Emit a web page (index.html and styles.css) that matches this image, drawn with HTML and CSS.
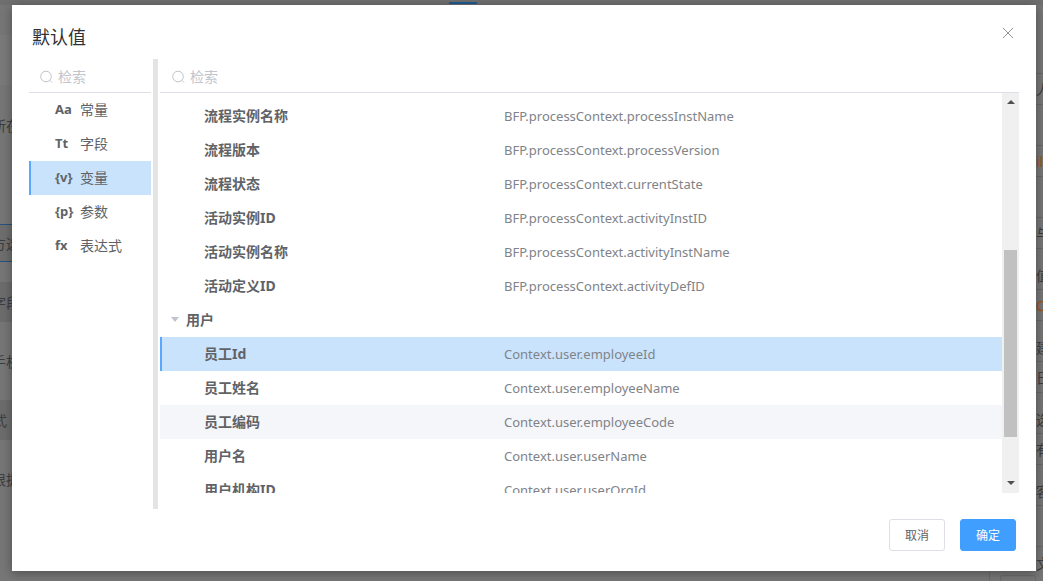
FILE: index.html
```html
<!DOCTYPE html>
<html lang="zh-CN">
<head>
<meta charset="utf-8">
<title>默认值</title>
<link rel="stylesheet" href="styles.css">
</head>
<body>
<div class="backdrop">
  <div class="top-strip"><span class="top-tab"></span></div>
  <div class="bg-main">
    <div class="bg-col bg-left">
      <div class="bg-row h30"></div>
      <div class="bg-row h50 lighter"></div>
      <div class="bg-row h20"></div>
      <div class="bg-row h40"><span class="bg-text">所在</span></div>
      <div class="bg-row h79"></div>
      <div class="bg-row h38 blue"><span class="bg-text">方选</span></div>
      <div class="bg-row h20"></div>
      <div class="bg-row h40 band"><span class="bg-text">字段</span></div>
      <div class="bg-row h78"><span class="bg-text">手机</span></div>
      <div class="bg-row h40 band"><span class="bg-text flush">式</span></div>
      <div class="bg-row h78"><span class="bg-text">根据</span></div>
    </div>
    <div class="bg-mid"><div class="bg-foot"><span class="bg-box"></span></div></div>
    <div class="bg-col bg-right">
      <div class="bg-row h69 line"></div>
      <div class="bg-row h31 line"><span class="bg-text">人</span></div>
      <div class="bg-row h41 line"></div>
      <div class="bg-row h31 line"><span class="bg-text orange">il</span></div>
      <div class="bg-row h41 line"></div>
      <div class="bg-row h31 line"><span class="bg-text">与</span></div>
      <div class="bg-row h41 line low"><span class="bg-text">值</span></div>
      <div class="bg-row h31 line"><span class="bg-text orange">Co</span></div>
      <div class="bg-row h41 line low"><span class="bg-text">建</span></div>
      <div class="bg-row h31 line"><span class="bg-text">日</span></div>
      <div class="bg-row h41 line low"><span class="bg-text">选</span></div>
      <div class="bg-row h31 line"><span class="bg-text">有</span></div>
      <div class="bg-row h41 line low"><span class="bg-text">客</span></div>
      <div class="bg-row h41 line"></div>
      <div class="bg-row h31"><span class="bg-text">文</span></div>
    </div>
  </div>
</div>

<div class="modal">
  <header class="modal-head">
    <h2 class="modal-title">默认值</h2>
    <svg class="close" viewBox="0 0 12 12" width="12" height="12"><path d="M1 1L11 11M11 1L1 11" fill="none" stroke="#909399" stroke-width="1"/></svg>
  </header>
  <div class="modal-body">
    <aside class="side">
      <div class="search">
        <svg class="search-icon" viewBox="0 0 14 14" width="14" height="14"><circle cx="7" cy="6.5" r="5.3" fill="none" stroke="#c0c4cc" stroke-width="1"/><path d="M10.7 10.2L13 12.5" stroke="#c0c4cc" stroke-width="1"/></svg>
        <span class="placeholder">检索</span>
      </div>
      <ul class="menu">
        <li class="menu-item"><b class="menu-key">Aa</b><span>常量</span></li>
        <li class="menu-item"><b class="menu-key">Tt</b><span>字段</span></li>
        <li class="menu-item active"><b class="menu-key">{v}</b><span>变量</span></li>
        <li class="menu-item"><b class="menu-key">{p}</b><span>参数</span></li>
        <li class="menu-item"><b class="menu-key">fx</b><span>表达式</span></li>
      </ul>
    </aside>
    <div class="splitter"></div>
    <section class="main">
      <div class="search search-main">
        <svg class="search-icon" viewBox="0 0 14 14" width="14" height="14"><circle cx="7" cy="6.5" r="5.3" fill="none" stroke="#c0c4cc" stroke-width="1"/><path d="M10.7 10.2L13 12.5" stroke="#c0c4cc" stroke-width="1"/></svg>
        <span class="placeholder">检索</span>
      </div>
      <div class="table-wrap">
        <div class="table">
          <div class="row"><span class="name">流程实例名称</span><span class="val">BFP.processContext.processInstName</span></div>
          <div class="row"><span class="name">流程版本</span><span class="val">BFP.processContext.processVersion</span></div>
          <div class="row"><span class="name">流程状态</span><span class="val">BFP.processContext.currentState</span></div>
          <div class="row"><span class="name">活动实例ID</span><span class="val">BFP.processContext.activityInstID</span></div>
          <div class="row"><span class="name">活动实例名称</span><span class="val">BFP.processContext.activityInstName</span></div>
          <div class="row"><span class="name">活动定义ID</span><span class="val">BFP.processContext.activityDefID</span></div>
          <div class="row group"><span class="caret"></span><span class="group-name">用户</span></div>
          <div class="row selected"><span class="name">员工Id</span><span class="val">Context.user.employeeId</span></div>
          <div class="row"><span class="name">员工姓名</span><span class="val">Context.user.employeeName</span></div>
          <div class="row hover"><span class="name">员工编码</span><span class="val">Context.user.employeeCode</span></div>
          <div class="row"><span class="name">用户名</span><span class="val">Context.user.userName</span></div>
          <div class="row"><span class="name">用户机构ID</span><span class="val">Context.user.userOrgId</span></div>
        </div>
        <div class="scrollbar">
          <span class="arrow up"></span>
          <span class="thumb"></span>
          <span class="arrow down"></span>
        </div>
      </div>
    </section>
  </div>
  <footer class="modal-foot">
    <button class="btn">取消</button>
    <button class="btn primary">确定</button>
  </footer>
</div>
</body>
</html>
```
FILE: styles.css
```css
* { box-sizing: border-box; }
html, body { margin: 0; padding: 0; height: 100%; }
body {
  width: 1043px;
  height: 581px;
  overflow: hidden;
  position: relative;
  background: #767676;
  font-family: "Noto Sans", "Noto Sans CJK SC", sans-serif;
  font-size: 14px;
}
ul { margin: 0; padding: 0; list-style: none; }

/* dimmed page behind the dialog */
.backdrop { height: 581px; display: flex; flex-direction: column; background: #767676; }
.top-strip { height: 5px; padding: 2px 0 0 449px; background: #6f6f6f; flex: none; }
.top-tab { display: block; width: 28px; height: 2px; background: #1f5a8f; }
.bg-main { flex: 1; display: flex; min-height: 0; }
.bg-mid { flex: 1; display: flex; align-items: flex-end; justify-content: flex-end; }
.bg-foot { width: 47px; height: 9px; border-left: 1px solid #696969; padding: 3px 0 0 10px; display: flex; }
.bg-box { flex: 1; border: 1px solid #6a6a6a; border-bottom: 0; border-radius: 3px 3px 0 0; }
.bg-col { display: flex; flex-direction: column; overflow: hidden; flex: none; }
.bg-left { width: 12px; }
.bg-right { width: 7px; }
.bg-row { display: flex; align-items: center; width: 100%; flex: none; overflow: hidden; white-space: nowrap; }
.bg-left .bg-row { justify-content: flex-end; }
.bg-text { color: #3d3d3f; font-size: 14px; flex: none; }
.bg-left .bg-text { margin-right: -8px; }
.bg-left .bg-text.flush { margin-right: 5px; }
.orange { color: #a8500f; }
.line { border-bottom: 1px solid #686868; }
.low { padding-top: 12px; }
.lighter { background: #7a7a7a; }
.band { background: #6c6c6c; }
.blue { border-top: 1px solid #24527d; border-bottom: 1px solid #24527d; background: #6e6e6e; }
.h20 { height: 20px; } .h30 { height: 30px; } .h31 { height: 31px; }
.h38 { height: 38px; } .h40 { height: 40px; } .h41 { height: 41px; }
.h50 { height: 50px; } .h69 { height: 69px; } .h78 { height: 78px; } .h79 { height: 79px; }

/* dialog */
.modal {
  position: absolute;
  left: 12px;
  top: 5px;
  width: 1024px;
  height: 566px;
  background: #fff;
  box-shadow: 0 2px 10px rgba(0, 0, 0, .35);
  display: flex;
  flex-direction: column;
  padding: 0 17px;
}
.modal-head { height: 54px; flex: none; display: flex; align-items: flex-start; justify-content: space-between; padding: 20px 5px 0 3px; }
.modal-title { margin: 0; font-size: 18px; line-height: 24px; font-weight: 400; color: #303133; }
.close { margin-top: 2px; }
.modal-body { height: 450px; flex: none; display: flex; }

.side { width: 122px; flex: none; }
.splitter { width: 5px; margin: 0 2px; background: #e4e4e4; flex: none; }
.main { flex: 1; min-width: 0; }

.search { height: 34px; display: flex; align-items: center; gap: 5px; padding: 2px 0 0 10px; border-bottom: 1px solid #dcdfe6; }
.search-main { padding-left: 11px; }
.search-icon { flex: none; }
.placeholder { color: #c0c4cc; font-size: 14px; line-height: 20px; }

.menu-item { height: 34px; display: flex; align-items: center; padding: 0 0 2px 26px; color: #606266; }
.menu-key { width: 25px; flex: none; font-weight: 700; font-size: 13px; }
.menu-item.active { background: #c9e3fd; border-left: 2px solid #58a8ff; padding-left: 24px; }

.table-wrap { height: 400px; display: flex; overflow: hidden; }
.table { flex: 1; min-width: 0; padding-top: 6px; overflow: hidden; }
.row { height: 34px; display: flex; align-items: center; padding: 0 0 2px 44px; }
.row.group { padding-left: 11px; }
.row.selected { background: #c9e3fd; border-left: 2px solid #58a8ff; padding-left: 42px; }
.row.hover { background: #f5f6fa; }
.name { width: 300px; flex: none; font-weight: 700; color: #606266; }
.val { color: #808388; font-size: 13px; padding-top: 2px; }
.group-name { margin-left: 7px; font-weight: 700; color: #606266; }
.caret { width: 0; height: 0; border-left: 4px solid transparent; border-right: 4px solid transparent; border-top: 5px solid #c0c4cc; }

.scrollbar { width: 17px; flex: none; background: #f0f0f0; display: flex; flex-direction: column; align-items: center; padding-top: 7px; }
.arrow { width: 0; height: 0; border-left: 4px solid transparent; border-right: 4px solid transparent; flex: none; }
.arrow.up { border-bottom: 4px solid #505050; }
.arrow.down { border-top: 4px solid #505050; margin-top: 44px; }
.thumb { width: 13px; height: 187px; margin-top: 146px; background: #c1c1c1; flex: none; }

.modal-foot { flex: 1; display: flex; justify-content: flex-end; gap: 15px; padding: 10px 3px 0 0; }
.btn { width: 56px; height: 32px; border: 1px solid #dcdfe6; border-radius: 3px; background: #fff; color: #606266; font: inherit; font-size: 12px; padding: 0; }
.btn.primary { background: #409eff; border-color: #409eff; color: #fff; }
```
